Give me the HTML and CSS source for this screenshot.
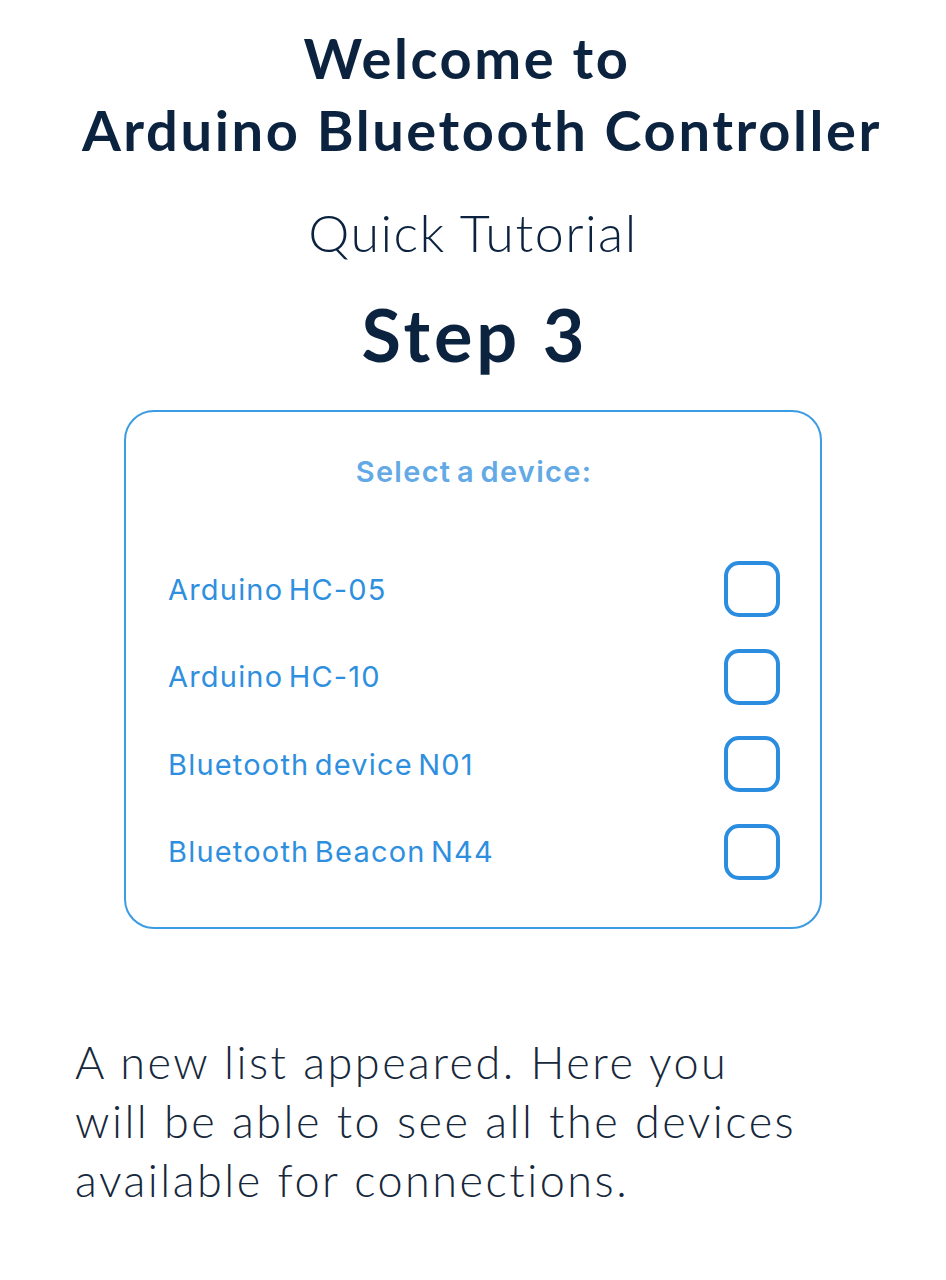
FILE: index.html
```html
<!DOCTYPE html>
<html lang="en">
<head>
<meta charset="utf-8">
<title>Quick Tutorial</title>
<link rel="stylesheet" href="styles.css">
</head>
<body>
<main class="page">
  <h1 class="title">Welcome to<br>Arduino Bluetooth Controller</h1>
  <p class="subtitle">Quick Tutorial</p>
  <h2 class="step">Step 3</h2>
  <section class="card">
    <div class="card-title">Select a device:</div>
    <ul class="devices">
      <li class="device"><span class="device-name">Arduino HC-05</span><span class="check"></span></li>
      <li class="device"><span class="device-name">Arduino HC-10</span><span class="check"></span></li>
      <li class="device"><span class="device-name">Bluetooth device N01</span><span class="check"></span></li>
      <li class="device"><span class="device-name">Bluetooth Beacon N44</span><span class="check"></span></li>
    </ul>
  </section>
  <p class="desc">A new list appeared. Here you<br>will be able to see all the devices<br>available for connections.</p>
</main>
</body>
</html>
```
FILE: styles.css
```css
html, body {
  margin: 0;
  padding: 0;
  background: #ffffff;
}
.page {
  width: 946px;
  height: 1280px;
  display: flex;
  flex-direction: column;
  align-items: center;
  font-family: "Lato", "Noto Sans", sans-serif;
  color: #0c2340;
}
.title {
  margin: 22px 0 0;
  padding-left: 18px;
  font-size: 56px;
  font-weight: 700;
  line-height: 72px;
  text-align: center;
  letter-spacing: 2.6px;
  text-indent: -30px;
}
.subtitle {
  margin: 36px 0 0;
  font-size: 52px;
  font-weight: 300;
  line-height: 60px;
  letter-spacing: 1.5px;
}
.step {
  margin: 32px 0 0;
  font-size: 72px;
  font-weight: 700;
  line-height: 80px;
  letter-spacing: 4px;
  padding-left: 4px;
}
.card {
  margin-top: 36px;
  width: 698px;
  height: 519px;
  box-sizing: border-box;
  border: 2px solid #3b9be3;
  border-radius: 30px;
  font-family: "Inter", "Noto Sans", sans-serif;
  padding: 42px 40px 0 42px;
}
.card-title {
  text-align: center;
  font-size: 29px;
  font-weight: 600;
  color: #62a9e6;
  line-height: 36px;
  letter-spacing: 1.3px;
  word-spacing: -3px;
}
.devices {
  list-style: none;
  margin: 71px 0 0;
  padding: 0;
  display: flex;
  flex-direction: column;
  gap: 31.5px;
}
.device {
  display: flex;
  align-items: center;
  justify-content: space-between;
  height: 56px;
}
.device-name {
  font-size: 29px;
  color: #2f8fdf;
  letter-spacing: 1.2px;
  word-spacing: -4px;
}
.check {
  width: 56px;
  height: 56px;
  box-sizing: border-box;
  border: 4px solid #2a8de0;
  border-radius: 15px;
}
.desc {
  align-self: stretch;
  margin: 104px 0 0;
  padding: 0 0 0 75px;
  font-size: 45px;
  font-weight: 300;
  line-height: 59px;
  letter-spacing: 2.5px;
  color: #16283c;
}
```
